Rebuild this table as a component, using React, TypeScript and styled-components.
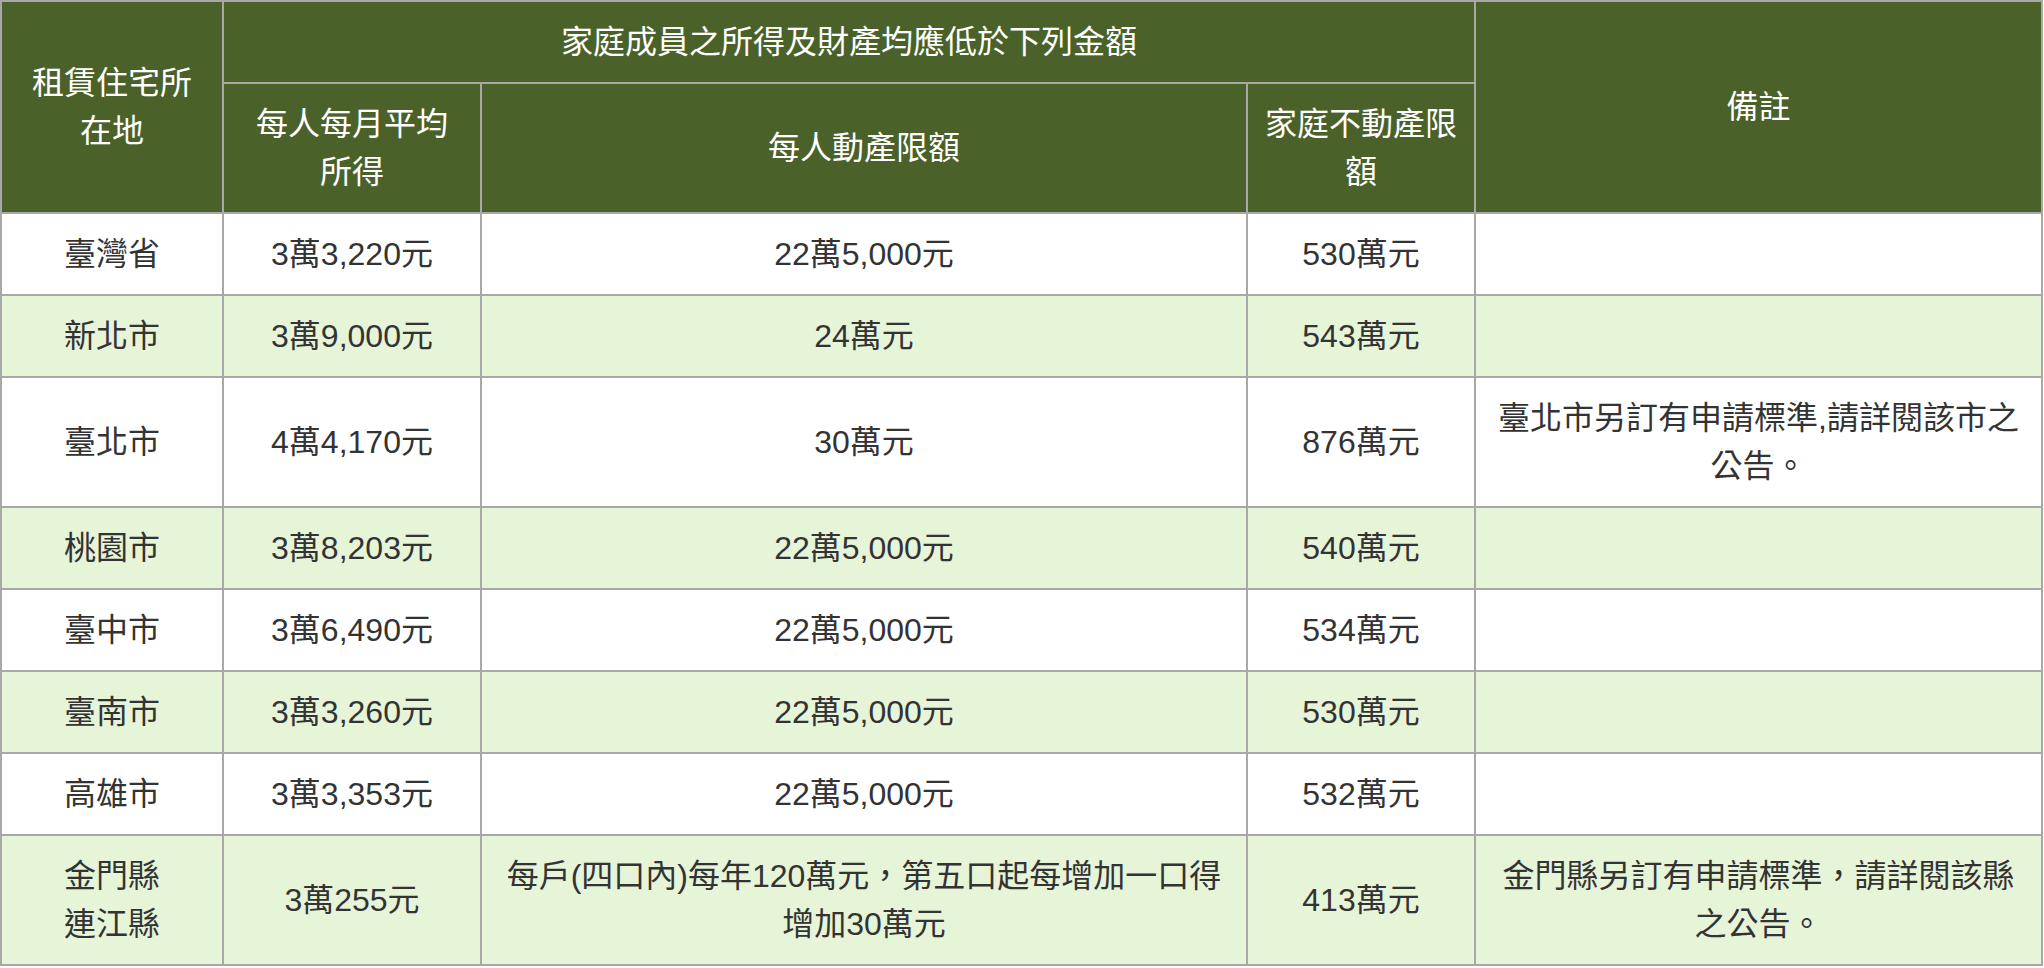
import React from "react";
import styled, { createGlobalStyle } from "styled-components";

const GlobalStyle = createGlobalStyle`
  html, body {
    margin: 0;
    padding: 0;
    background: #ffffff;
  }
  body {
    font-family: "Liberation Sans", "Noto Sans CJK TC", sans-serif;
  }
`;

const Table = styled.table`
  width: 2043px;
  table-layout: fixed;
  border-collapse: collapse;
  font-family: "Liberation Sans", "Noto Sans CJK TC", sans-serif;
  font-size: 32px;
  line-height: 48px;
  color: #333333;
`;

const HeadCell = styled.th`
  background: #4a6229;
  color: #ffffff;
  font-weight: 400;
  border: 2px solid #a8a8a8;
  padding: 16px 16.5px;
  text-align: center;
  vertical-align: middle;
`;

const Row = styled.tr<{ $alt: boolean }>`
  background: ${(p) => (p.$alt ? "#e6f4d8" : "#ffffff")};
`;

const Cell = styled.td`
  border: 2px solid #a8a8a8;
  padding: 16px 16.5px;
  text-align: center;
  vertical-align: middle;
`;

type Item = {
  area: React.ReactNode;
  income: string;
  movable: string;
  estate: string;
  note: string;
};

const rows: Item[] = [
  { area: "臺灣省", income: "3萬3,220元", movable: "22萬5,000元", estate: "530萬元", note: "" },
  { area: "新北市", income: "3萬9,000元", movable: "24萬元", estate: "543萬元", note: "" },
  {
    area: "臺北市",
    income: "4萬4,170元",
    movable: "30萬元",
    estate: "876萬元",
    note: "臺北市另訂有申請標準,請詳閱該市之公告。",
  },
  { area: "桃園市", income: "3萬8,203元", movable: "22萬5,000元", estate: "540萬元", note: "" },
  { area: "臺中市", income: "3萬6,490元", movable: "22萬5,000元", estate: "534萬元", note: "" },
  { area: "臺南市", income: "3萬3,260元", movable: "22萬5,000元", estate: "530萬元", note: "" },
  { area: "高雄市", income: "3萬3,353元", movable: "22萬5,000元", estate: "532萬元", note: "" },
  {
    area: (
      <>
        金門縣
        <br />
        連江縣
      </>
    ),
    income: "3萬255元",
    movable: "每戶(四口內)每年120萬元，第五口起每增加一口得增加30萬元",
    estate: "413萬元",
    note: "金門縣另訂有申請標準，請詳閱該縣之公告。",
  },
];

export default function App() {
  return (
    <>
      <GlobalStyle />
      <Table>
        <colgroup>
          <col style={{ width: 222 }} />
          <col style={{ width: 258 }} />
          <col style={{ width: 766 }} />
          <col style={{ width: 228 }} />
          <col style={{ width: 567 }} />
        </colgroup>
        <thead>
          <tr>
            <HeadCell rowSpan={2}>租賃住宅所在地</HeadCell>
            <HeadCell colSpan={3}>家庭成員之所得及財產均應低於下列金額</HeadCell>
            <HeadCell rowSpan={2}>備註</HeadCell>
          </tr>
          <tr>
            <HeadCell>每人每月平均所得</HeadCell>
            <HeadCell>每人動產限額</HeadCell>
            <HeadCell>家庭不動產限額</HeadCell>
          </tr>
        </thead>
        <tbody>
          {rows.map((r, i) => (
            <Row key={i} $alt={i % 2 === 1}>
              <Cell>{r.area}</Cell>
              <Cell>{r.income}</Cell>
              <Cell>{r.movable}</Cell>
              <Cell>{r.estate}</Cell>
              <Cell>{r.note}</Cell>
            </Row>
          ))}
        </tbody>
      </Table>
    </>
  );
}
